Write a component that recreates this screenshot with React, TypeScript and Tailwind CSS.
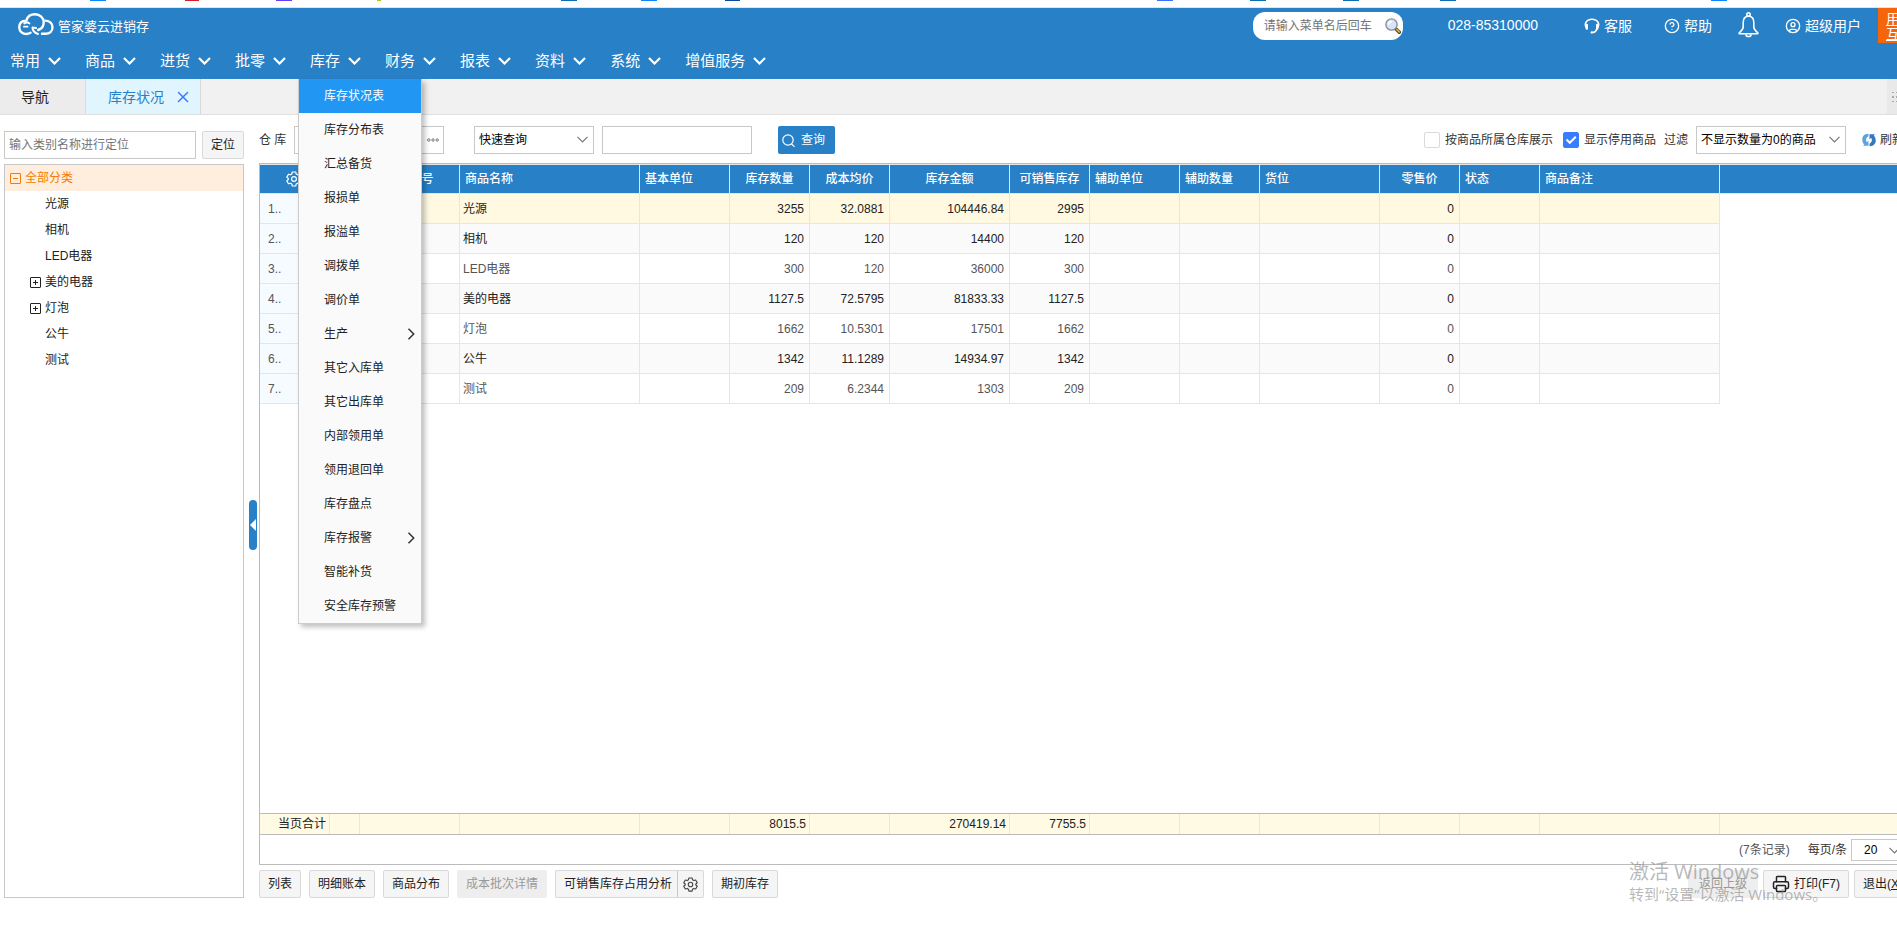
import React from 'react';
import { CircleHelp, CircleUser, Printer, X } from 'lucide-react';

const menus = ['常用', '商品', '进货', '批零', '库存', '财务', '报表', '资料', '系统', '增值服务'];

const stockMenu = [
  { label: '库存状况表', active: true },
  { label: '库存分布表' },
  { label: '汇总备货' },
  { label: '报损单' },
  { label: '报溢单' },
  { label: '调拨单' },
  { label: '调价单' },
  { label: '生产', sub: true },
  { label: '其它入库单' },
  { label: '其它出库单' },
  { label: '内部领用单' },
  { label: '领用退回单' },
  { label: '库存盘点' },
  { label: '库存报警', sub: true },
  { label: '智能补货' },
  { label: '安全库存预警' },
];

const categories = [
  { label: '光源' },
  { label: '相机' },
  { label: 'LED电器' },
  { label: '美的电器', sub: true },
  { label: '灯泡', sub: true },
  { label: '公牛' },
  { label: '测试' },
];

const columns = [
  { key: 'no', label: '', width: 70 },
  { key: 'check', label: '', width: 30 },
  { key: 'code', label: '商品编号', width: 100, center: true },
  { key: 'name', label: '商品名称', width: 180 },
  { key: 'unit', label: '基本单位', width: 90 },
  { key: 'qty', label: '库存数量', width: 80, num: true },
  { key: 'avg', label: '成本均价', width: 80, num: true },
  { key: 'amount', label: '库存金额', width: 120, num: true },
  { key: 'sale', label: '可销售库存', width: 80, num: true },
  { key: 'auxUnit', label: '辅助单位', width: 90 },
  { key: 'auxQty', label: '辅助数量', width: 80 },
  { key: 'place', label: '货位', width: 120 },
  { key: 'price', label: '零售价', width: 80, num: true },
  { key: 'status', label: '状态', width: 80 },
  { key: 'remark', label: '商品备注', width: 180 },
];

const rows: Record<string, string>[] = [
  { name: '光源', qty: '3255', avg: '32.0881', amount: '104446.84', sale: '2995', price: '0' },
  { name: '相机', qty: '120', avg: '120', amount: '14400', sale: '120', price: '0' },
  { name: 'LED电器', qty: '300', avg: '120', amount: '36000', sale: '300', price: '0' },
  { name: '美的电器', qty: '1127.5', avg: '72.5795', amount: '81833.33', sale: '1127.5', price: '0' },
  { name: '灯泡', qty: '1662', avg: '10.5301', amount: '17501', sale: '1662', price: '0' },
  { name: '公牛', qty: '1342', avg: '11.1289', amount: '14934.97', sale: '1342', price: '0' },
  { name: '测试', qty: '209', avg: '6.2344', amount: '1303', sale: '209', price: '0' },
];

const totals: Record<string, string> = { qty: '8015.5', amount: '270419.14', sale: '7755.5' };

const buttonClass = 'h-7 rounded-xs border border-[#d9d9d9] bg-[#f5f5f5] px-2 whitespace-nowrap text-[#222]';

const Logo = () => (
  <svg className="h-[23px] w-9" viewBox="0 0 36 23" fill="none" stroke="#fff" strokeWidth="2.4" strokeLinecap="round" strokeLinejoin="round">
    <path d="M6 13.700h3.500M6.200 10.500C8 9 10.500 9.300 11.500 10.500" strokeWidth="1.800" />
    <path d="M12.500 19.800C8 22.300 1.500 20.500 1.300 14.500 1.100 10 4 7.800 8.300 7.600 9.500 3.500 13 1.300 17 1.300c5 0 8.700 3.500 8.700 8 0 4-2.200 6.700-5.500 7.700" />
    <path d="M14.500 14.500c0 3 2.500 5.500 5.500 6.500M14.500 14.500l3.500.5" strokeWidth="2" />
    <path d="M27.500 7.600c4.200.4 7 3 7 6.700 0 4-3 6.500-7 6.500h-3.500" />
  </svg>
);

const Gear = ({ className }: { className?: string }) => (
  <svg className={className} viewBox="0 0 16 16" fill="none" stroke="currentColor" strokeWidth="1.2" strokeLinejoin="round">
    <path d="M6.300 1h3.400l.5 2 1.300.8 2-.6 1.700 2.900L13.700 7.500v1l1.500 1.400-1.700 2.900-2-.6-1.300.8-.5 2H6.300l-.5-2-1.300-.8-2 .6L.8 9.900l1.500-1.400v-1L.8 6.100l1.700-2.900 2 .6 1.300-.8z" />
    <circle cx="8" cy="8" r="2.400" />
  </svg>
);

const DownArrow = ({ className }: { className?: string }) => (
  <svg className={`pointer-events-none absolute h-[7px] w-[11px] text-[#777] ${className}`} viewBox="0 0 11 7" fill="none" stroke="currentColor" strokeWidth="1.2">
    <path d="M.5 .8l5 5 5-5" />
  </svg>
);

const Headset = () => (
  <svg className="size-4" viewBox="0 0 16 16" fill="none" stroke="#fff" strokeWidth="1.6" strokeLinecap="round">
    <path d="M3 10.500C-.5 6.500 2 1.300 8 1.300s8.500 5.200 5 9.200" />
    <path d="M2.800 7v3.500M13.200 7v3.500" strokeWidth="2.4" />
    <path d="M12.800 11c-.5 2-1.800 3.200-4 3.500" />
    <circle cx="7.800" cy="14.400" r="1.200" fill="#fff" stroke="none" />
  </svg>
);

const Bell = () => (
  <svg className="h-[26px] w-[21px]" viewBox="0 0 21 26" fill="none" stroke="#fff" strokeWidth="1.6" strokeLinejoin="round">
    <circle cx="10.500" cy="2.500" r="1.700" />
    <path d="M10.500 4.200c-3.500 0-5.300 2.800-5.300 6.300v4.500c0 2.500-2 4-4 5.800v.9h18.600v-.9c-2-1.800-4-3.300-4-5.800v-4.500c0-3.500-1.800-6.300-5.300-6.300z" />
    <path d="M7.800 22.300c.4 3 5 3 5.400 0" />
  </svg>
);

const Magnifier = () => (
  <svg className="size-4" viewBox="0 0 16 16">
    <path d="M11 11l3.300 3.300" stroke="#4d4326" strokeWidth="3.400" strokeLinecap="round" />
    <path d="M12 11.600l2.200 2.200" stroke="#e0b13a" strokeWidth="1.800" strokeLinecap="round" />
    <circle cx="6.500" cy="6.500" r="5.600" fill="#d6e5fb" stroke="#8a8f98" strokeWidth="1.400" />
    <path d="M3.500 6.500c.2-1.800 1.300-2.800 3-3" fill="none" stroke="#fff" strokeWidth="1.400" strokeLinecap="round" />
  </svg>
);

const SearchIcon = () => (
  <svg className="size-[13px]" viewBox="0 0 13 13" fill="none" stroke="#fff" strokeWidth="1.2" strokeLinecap="round">
    <circle cx="6" cy="6" r="5.200" />
    <path d="M9.800 10.200l2.400 2.200" />
  </svg>
);

const Refresh = () => (
  <svg className="size-[14px]" viewBox="0 0 14 14">
    <path d="M6.500 .8C2.500.6 0 3.500.3 7c.1 2 .9 3.500 2 4.500L1 12.800h5.500V7.500L4.800 9.200C3.500 7 4 4.500 6.500 3.300z" fill="#5aa5de" />
    <path d="M7.500 13.200c4 .2 6.500-2.700 6.200-6.200-.1-2-.9-3.500-2-4.500L13 1.200H7.500v5.300l1.700-1.700c1.300 2.200.8 4.700-1.700 5.900z" fill="#3579bd" />
  </svg>
);

const ExpandBox = ({ minus }: { minus?: boolean }) => (
  <svg className="size-[11px] shrink-0" viewBox="0 0 11 11" fill="none" stroke="currentColor">
    <rect x=".5" y=".5" width="10" height="10" rx=".5" />
    <path d={minus ? 'M3 5.500h5' : 'M3 5.500h5M5.500 3v5'} />
  </svg>
);

const ColGroup = () => (
  <colgroup>
    {columns.map((c) => (
      <col key={c.key} style={{ width: c.width }} />
    ))}
    <col />
  </colgroup>
);

const TopBar: React.FC = () => (
  <header className="bg-[#2880c7] text-white">
    <div className="flex h-9 justify-between">
      <div className="flex items-start gap-1 pt-[5px] pl-[18px]">
        <Logo />
        <span className="pt-1 text-[13px] leading-5">管家婆云进销存</span>
      </div>
      <div className="flex items-start text-sm leading-5 whitespace-nowrap">
        <label className="mt-1 flex h-7 w-[150px] items-center rounded-xl bg-white pr-[2px] pl-[11px]">
          <input
            type="text"
            aria-label="菜单搜索"
            placeholder="请输入菜单名后回车"
            className="min-w-0 flex-1 text-xs text-[#333] outline-none placeholder:text-[#757575]"
          />
          <Magnifier />
        </label>
        <span className="mt-[7px] ml-[45px]">028-85310000</span>
        <a href="#" className="mt-2 ml-[46px] flex items-center gap-1">
          <Headset />
          客服
        </a>
        <a href="#" className="mt-2 ml-8 flex items-center gap-1">
          <CircleHelp size={16} strokeWidth={2} />
          帮助
        </a>
        <a href="#" aria-label="消息" className="mt-1 ml-[26px]">
          <Bell />
        </a>
        <a href="#" className="mt-2 ml-[26px] flex items-center gap-1">
          <CircleUser size={16} strokeWidth={2} />
          超级用户
        </a>
        <a href="#" className="ml-[17px] h-[35px] w-[42px] shrink-0 bg-[#f5660a] pt-1 pl-2 leading-[15px] underline">
          用户
          <br />
          互动
        </a>
      </div>
    </div>
    <nav className="flex h-[35px] items-center gap-6 pl-[10px] text-[15px] leading-5">
      {menus.map((m) => (
        <div key={m} className="relative flex h-full items-center">
          <button type="button" className="flex items-center gap-2 pb-[2px]">
            {m}
            <svg className="h-2 w-[13px]" viewBox="0 0 13 8" fill="none" stroke="#fff" strokeWidth="2.2">
              <path d="M1 1l5.500 5.500L12 1" />
            </svg>
          </button>
          {m === '库存' && <StockMenu />}
        </div>
      ))}
    </nav>
  </header>
);

const StockMenu: React.FC = () => (
  <ul className="absolute top-full -left-3 z-10 w-[124px] border border-t-0 border-[#ccc] bg-[#fafafa] text-xs shadow-[3px_3px_5px_rgba(0,0,0,0.25)]">
    {stockMenu.map((item) => (
      <li key={item.label}>
        <a
          href="#"
          className={
            item.active
              ? 'flex h-[34px] items-center justify-between bg-[#2196f3] pr-[6px] pl-[25px] text-white'
              : 'flex h-[34px] items-center justify-between pr-[6px] pl-[25px] text-[#222]'
          }
        >
          {item.label}
          {item.sub && (
            <svg className="h-3 w-2" viewBox="0 0 8 12" fill="none" stroke="#333" strokeWidth="1.5">
              <path d="M1.500 .8L6.700 6l-5.200 5.200" />
            </svg>
          )}
        </a>
      </li>
    ))}
  </ul>
);

const Tabs: React.FC = () => (
  <div className="flex h-9 border-b border-[#e0e0e0] bg-[#f1f1f1] text-sm">
    <button type="button" className="w-[86px] border-r border-[#d9d9d9] bg-[#ececec] pr-[15px] text-[#222]">
      导航
    </button>
    <div className="flex w-[115px] items-center border-r border-[#d9d9d9] bg-[#e0f5fd] pl-[22px] text-[#2880c7]">
      <span className="flex-1">库存状况</span>
      <button type="button" aria-label="关闭" className="mr-2 text-[#3b7cff]">
        <X size={18} strokeWidth={2} />
      </button>
    </div>
    <div className="ml-auto flex w-[33px] items-center bg-[#e9e9e9] pl-1">
      <svg className="h-3 w-4" viewBox="0 0 16 12" fill="#aaa">
        <path d="M1 1h2v1H1zM5 1h2v1H5zM9 1h2v1H9zM1 5h2v2H1zM5 5h2v2H5zM9 5h2v2H9zM1 10h2v1H1zM5 10h2v1H5zM9 10h2v1H9z" />
      </svg>
    </div>
  </div>
);

const Sidebar: React.FC = () => (
  <aside className="flex w-[244px] shrink-0 flex-col gap-[5px] pt-4 pl-1">
    <div className="flex gap-[6px]">
      <input
        type="text"
        aria-label="类别名称"
        placeholder="输入类别名称进行定位"
        className="h-7 min-w-0 flex-1 border border-[#c8c8c8] px-1 outline-none placeholder:text-[#757575]"
      />
      <button type="button" className={buttonClass}>定位</button>
    </div>
    <div className="flex-1 border border-[#c8c8c8]">
      <div className="flex h-[26px] items-center gap-1 bg-[#ffeede] pl-[5px] text-[#f57c00]">
        <ExpandBox minus />
        全部分类
      </div>
      <ul>
        {categories.map((c) => (
          <li key={c.label} className="flex h-[26px] items-center pl-[25px] text-[#222]">
            <span className="w-[15px]">{c.sub && <ExpandBox />}</span>
            {c.label}
          </li>
        ))}
      </ul>
    </div>
  </aside>
);

const FilterBar: React.FC = () => (
  <div className="flex h-7 items-center pr-4">
    <label htmlFor="store" className="w-[35px] text-[#333]">仓 库</label>
    <div className="flex h-7 w-[150px] items-center border border-[#c8c8c8] pr-1">
      <input id="store" type="text" className="min-w-0 flex-1 outline-none" />
      <button type="button" aria-label="选择仓库" className="text-[#777]">
        <svg className="h-1 w-3" viewBox="0 0 12 4" fill="none" stroke="currentColor">
          <circle cx="1.800" cy="2" r="1.200" />
          <circle cx="6" cy="2" r="1.200" />
          <circle cx="10.200" cy="2" r="1.200" />
        </svg>
      </button>
    </div>
    <div className="relative ml-[30px]">
      <select aria-label="查询方式" className="h-7 w-[120px] appearance-none border border-[#c8c8c8] pl-1 text-black">
        <option>快速查询</option>
      </select>
      <DownArrow className="top-[10px] right-[6px]" />
    </div>
    <input type="text" aria-label="查询内容" className="ml-2 h-7 w-[150px] border border-[#c8c8c8] px-1 outline-none" />
    <button type="button" className="ml-[26px] flex h-7 w-[57px] items-center gap-[6px] rounded-xs bg-[#2880c7] pl-1 text-white">
      <SearchIcon />
      查询
    </button>
    <div className="ml-auto flex items-center whitespace-nowrap text-[#333]">
      <label className="flex items-center gap-[5px]">
        <input type="checkbox" className="size-4 appearance-none rounded-xs border border-[#d9d9d9] bg-white" />
        按商品所属仓库展示
      </label>
      <label className="ml-[10px] flex items-center gap-[5px]">
        <span className="grid size-4">
          <input type="checkbox" defaultChecked className="peer col-start-1 row-start-1 size-4 appearance-none rounded-xs border border-[#d9d9d9] checked:border-[#387cff] checked:bg-[#387cff]" />
          <svg className="pointer-events-none invisible col-start-1 row-start-1 size-4 peer-checked:visible" viewBox="0 0 16 16" fill="none" stroke="#fff" strokeWidth="2">
            <path d="M3.500 7.500l3.300 3.300 6-6" />
          </svg>
        </span>
        显示停用商品
      </label>
      <label htmlFor="filter" className="ml-2">过滤</label>
      <div className="relative ml-2">
        <select id="filter" defaultValue="0" className="h-7 w-[150px] appearance-none border border-[#c8c8c8] pl-1 text-black">
          <option value="0">不显示数量为0的商品</option>
        </select>
        <DownArrow className="top-[10px] right-[6px]" />
      </div>
      <button type="button" className="ml-4 flex items-center gap-1">
        <Refresh />
        刷新
      </button>
    </div>
  </div>
);

const cellColor = (i: number) => {
  if (i === 0) return 'bg-[#fff9e1] text-[#222]';
  if (i % 2 === 1) return 'bg-[#fafafa] text-[#222]';
  return 'bg-white text-[#555]';
};

const StockTable: React.FC = () => (
  <table className="w-full table-fixed border-separate border-spacing-0">
    <ColGroup />
    <thead>
      <tr className="bg-[#2880c7] text-white">
        {columns.map((c) => (
          <th
            key={c.key}
            className={`h-[30px] border-y border-r border-[#e6e6e6] p-0 font-medium whitespace-nowrap ${c.num || c.center ? 'text-center' : 'pl-[5px] text-left'}`}
          >
            {c.key === 'no' && <Gear className="ml-[21px] size-4" />}
            {c.label}
          </th>
        ))}
        <th className="border-y border-[#e6e6e6]" />
      </tr>
    </thead>
    <tbody>
      {rows.map((row, i) => (
        <tr key={row.name}>
          <td className="h-[30px] border-r border-b border-[#e6e6e6] bg-[#f5fbff] py-0 pl-2 text-[#555]">{i + 1}..</td>
          {columns.slice(1).map((c) => (
            <td
              key={c.key}
              className={`border-r border-b border-[#e6e6e6] py-0 ${c.num ? 'pr-[5px] text-right' : 'pl-[3px]'} ${cellColor(i)}`}
            >
              {row[c.key]}
            </td>
          ))}
          <td />
        </tr>
      ))}
    </tbody>
  </table>
);

const TotalTable: React.FC = () => (
  <table className="w-full table-fixed border-separate border-spacing-0 border-y border-y-[#bbb] bg-[#fefae3] text-[#222]">
    <ColGroup />
    <tbody>
      <tr>
        <td className="h-5 border-r border-[#e6e6e6] py-0 pr-[3px] text-right">当页合计</td>
        {columns.slice(1).map((c) => (
          <td key={c.key} className="border-r border-[#e6e6e6] py-0 pr-[3px] text-right">
            {totals[c.key]}
          </td>
        ))}
        <td />
      </tr>
    </tbody>
  </table>
);

const Pager: React.FC = () => (
  <div className="flex h-[29px] items-center justify-end pr-2 text-[#333]">
    <span className="text-[#555]">(7条记录)</span>
    <label htmlFor="size" className="mr-1 ml-[18px]">每页/条</label>
    <div className="relative">
      <select id="size" className="h-[22px] w-[61px] appearance-none border border-[#c8c8c8] pl-3 text-black">
        <option>20</option>
      </select>
      <DownArrow className="top-2 right-3" />
    </div>
  </div>
);

const ActionBar: React.FC = () => (
  <div className="mt-[5px] flex gap-2 pr-2">
    <button type="button" className={buttonClass}>列表</button>
    <button type="button" className={buttonClass}>明细账本</button>
    <button type="button" className={buttonClass}>商品分布</button>
    <button type="button" disabled className="h-7 rounded-xs bg-[#eee] px-[9px] text-[#999]">成本批次详情</button>
    <div className="flex">
      <button type="button" className="h-7 rounded-l-xs border border-r-0 border-[#d9d9d9] bg-[#f5f5f5] pr-[5px] pl-2 text-[#222]">
        可销售库存占用分析
      </button>
      <button type="button" aria-label="设置" className="flex h-7 w-[27px] items-center justify-center rounded-r-xs border border-[#d9d9d9] border-l-[#c8c8c8] bg-[#f5f5f5] text-[#444]">
        <Gear className="size-[15px]" />
      </button>
    </div>
    <button type="button" className={buttonClass}>期初库存</button>
    <div className="ml-auto flex gap-[5px]">
      <button type="button" disabled className="h-7 w-[70px] rounded-xs bg-[#eee] text-[#999]">返回上级</button>
      <button type="button" className={`${buttonClass} flex w-[86px] items-center gap-1`}>
        <Printer size={18} strokeWidth={2} className="shrink-0" />
        打印(F7)
      </button>
      <button type="button" className={buttonClass}>退出(<u>X</u>)</button>
    </div>
  </div>
);

// bottoms of the bookmark icons above the page
const BookmarkStrip: React.FC = () => (
  <svg className="block h-2 w-full" fill="#fff">
    <rect x="90" width="16" height="1" fill="#0a84ff" />
    <rect x="185" width="14" height="1" fill="#d0202c" />
    <rect x="276" width="16" height="1" fill="#6a3df5" />
    <rect x="377" width="4" height="1" fill="#9bd31a" />
    <rect x="561" width="16" height="1" fill="#0a6eb4" />
    <rect x="641" width="16" height="1" fill="#0a84ff" />
    <rect x="725" width="15" height="1" fill="#0b4a9e" />
    <rect x="1157" width="16" height="1" fill="#3d6fff" />
    <rect x="1250" width="16" height="1" fill="#0a6eb4" />
    <rect x="1343" width="16" height="1" fill="#0a6eb4" />
    <rect x="1440" width="16" height="1" fill="#0a6eb4" />
    <rect x="1711" width="16" height="1" fill="#0a84ff" />
    <rect y="7" width="100%" height="1" fill="#e3e3e3" />
  </svg>
);

const App: React.FC = () => (
  <div className="relative h-screen overflow-hidden bg-white font-['Liberation_Sans','Noto_Sans_CJK_SC',sans-serif] text-xs">
    <div className="flex h-full w-[calc(100%+23px)] flex-col">
      <BookmarkStrip />
      <TopBar />
      <Tabs />
      <div className="flex min-h-0 flex-1 pb-[27px]">
        <Sidebar />
        <div className="flex w-[15px] shrink-0 items-center pl-[5px]">
          <button type="button" aria-label="收起" className="mt-9 flex h-[50px] w-2 items-center justify-center rounded-full bg-[#2880c7]">
            <svg className="h-3 w-[6px]" viewBox="0 0 6 12" fill="#fff">
              <path d="M6 0v12L0 6z" />
            </svg>
          </button>
        </div>
        <main className="flex min-w-0 flex-1 flex-col pt-[11px]">
          <FilterBar />
          <div className="mt-[9px] flex min-h-0 flex-1 flex-col border border-r-0 border-[#bbb]">
            <div className="min-h-0 flex-1">
              <StockTable />
            </div>
            <TotalTable />
            <Pager />
          </div>
          <ActionBar />
        </main>
      </div>
    </div>
    <div className="pointer-events-none absolute right-[72px] bottom-5 w-[196px] font-['Open_Sans','Noto_Sans_CJK_SC',sans-serif] whitespace-nowrap text-[#888]/60">
      <p className="text-xl leading-[22px]">激活 Windows</p>
      <p className="text-[15px] leading-[22px]">转到“设置”以激活 Windows。</p>
    </div>
  </div>
);

export default App;
